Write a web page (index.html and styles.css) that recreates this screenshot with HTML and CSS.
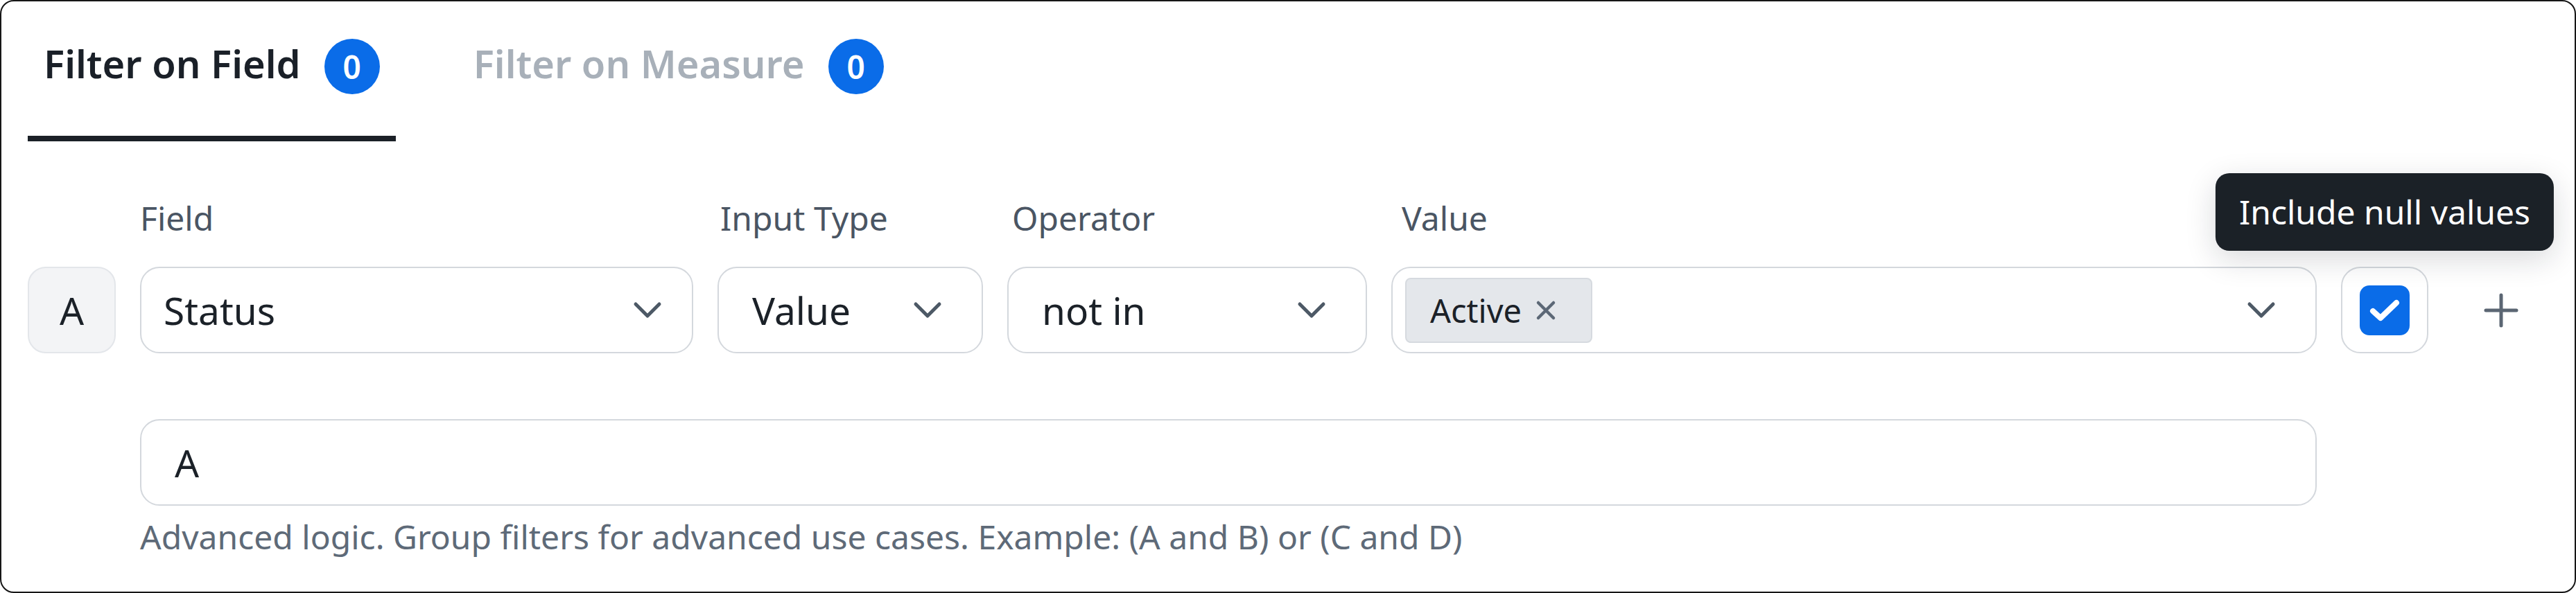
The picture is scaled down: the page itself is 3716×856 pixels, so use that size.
FILE: index.html
```html
<!DOCTYPE html>
<html lang="en">
<head>
<meta charset="utf-8">
<title>Filters</title>
<link rel="stylesheet" href="styles.css">
</head>
<body>
<div class="card">
  <div class="tabs">
    <div class="tab tab--active"><span class="tab__label">Filter on Field</span><span class="badge">0</span></div>
    <div class="tab"><span class="tab__label">Filter on Measure</span><span class="badge">0</span></div>
  </div>

  <div class="filters">
    <div class="lbl"></div>
    <div class="lbl">Field</div>
    <div class="lbl lbl--type">Input Type</div>
    <div class="lbl lbl--operator">Operator</div>
    <div class="lbl lbl--value">Value</div>

    <div class="cell row-id">A</div>
    <div class="cell select select--field">
      <span class="select__text">Status</span>
      <svg class="chevron" viewBox="0 0 42 26"><polyline points="4,4 21,21 38,4"/></svg>
    </div>
    <div class="cell select">
      <span class="select__text">Value</span>
      <svg class="chevron" viewBox="0 0 42 26"><polyline points="4,4 21,21 38,4"/></svg>
    </div>
    <div class="cell select">
      <span class="select__text">not in</span>
      <svg class="chevron" viewBox="0 0 42 26"><polyline points="4,4 21,21 38,4"/></svg>
    </div>
    <div class="cell select select--multi">
      <span class="chip">Active<svg class="chip__x" viewBox="0 0 30 30"><path d="M4 4L26 26M26 4L4 26"/></svg></span>
      <svg class="chevron" viewBox="0 0 42 26"><polyline points="4,4 21,21 38,4"/></svg>
    </div>
    <div class="cell check-cell">
      <div class="tooltip">Include null values</div>
      <span class="checkbox"><svg viewBox="0 0 72 72"><polyline points="19,37 30,47 53,25"/></svg></span>
    </div>
    <div class="cell icon-btn">
      <svg class="plus" viewBox="0 0 50 50"><path d="M25 3V47M3 25H47"/></svg>
    </div>
    <div class="cell icon-btn icon-btn--edge">
      <svg class="ring" viewBox="0 0 50 50"><circle cx="25" cy="25" r="21"/></svg>
    </div>

    <div class="advanced">A</div>
    <p class="hint">Advanced logic. Group filters for advanced use cases. Example: (A and B) or (C and D)</p>
  </div>
</div>
</body>
</html>
```

FILE: styles.css
```css
html, body {
  margin: 0;
  padding: 0;
  background: #ffffff;
}

body {
  font-family: "Noto Sans", "Open Sans", sans-serif;
  color: #1b2128;
}

.card {
  box-sizing: border-box;
  width: 3716px;
  height: 856px;
  border: 2px solid #161616;
  border-radius: 20px;
  background: #ffffff;
  overflow: hidden;
}

/* Tabs */
.tabs {
  display: flex;
  gap: 89px;
  padding-left: 38px;
}

.tab {
  display: flex;
  align-items: flex-start;
  gap: 34px;
  padding: 54px 23px 60px;
  border-bottom: 8px solid transparent;
  color: #a8b0b9;
}

.tab--active {
  color: #1a2028;
  border-bottom-color: #1b2027;
}

.tab__label {
  font-size: 56px;
  font-weight: 600;
  line-height: 70px;
  white-space: nowrap;
}

.badge {
  width: 80px;
  height: 80px;
  border-radius: 50%;
  background: #0a6ce8;
  color: #ffffff;
  font-size: 46px;
  font-weight: 600;
  line-height: 80px;
  text-align: center;
}

/* Filter grid */
.filters {
  display: grid;
  grid-template-columns: 127px 798px 383px 519px 1335px 126px 140px 50px;
  column-gap: 35px;
  margin: 79px 0 0 38px;
}

.lbl {
  grid-row: 1;
  font-size: 48px;
  line-height: 64px;
  color: #4a5563;
  white-space: nowrap;
}

.lbl--type {
  padding-left: 4px;
}

.lbl--operator {
  padding-left: 7px;
}

.lbl--value {
  padding-left: 15px;
}

.cell {
  grid-row: 2;
  box-sizing: border-box;
  height: 125px;
  margin-top: 38px;
}

.row-id {
  display: flex;
  align-items: center;
  justify-content: center;
  background: #f3f4f6;
  border: 2px solid #e3e6ea;
  border-radius: 26px;
  font-size: 55px;
  color: #1b2128;
}

.select {
  display: flex;
  align-items: center;
  justify-content: space-between;
  padding: 0 57px 0 48px;
  border: 2px solid #d4d8dd;
  border-radius: 28px;
  background: #ffffff;
}

.select--field {
  padding: 0 43px 0 32px;
}

.select--multi {
  padding-left: 18px;
}

.select__text {
  font-size: 55px;
  color: #1b2128;
  white-space: nowrap;
}

.chevron {
  width: 42px;
  height: 26px;
  flex: none;
}

.chevron polyline {
  fill: none;
  stroke: #4d5966;
  stroke-width: 5;
  stroke-linecap: round;
  stroke-linejoin: round;
}

.chip {
  display: inline-flex;
  align-items: center;
  gap: 20px;
  box-sizing: border-box;
  height: 94px;
  padding: 0 50px 0 34px;
  background: #e4e7eb;
  border: 2px solid #d6dadf;
  border-radius: 8px;
  font-size: 47px;
  color: #1b2128;
}

.chip__x {
  width: 30px;
  height: 30px;
}

.chip__x path {
  stroke: #5c6876;
  stroke-width: 4.5;
  stroke-linecap: round;
}

.check-cell {
  position: relative;
  display: flex;
  align-items: center;
  justify-content: center;
  border: 2px solid #d4d8dd;
  border-radius: 28px;
  background: #ffffff;
}

.checkbox {
  display: block;
  width: 72px;
  height: 72px;
  border-radius: 14px;
  background: #0a6ce8;
}

.checkbox svg {
  display: block;
  width: 72px;
  height: 72px;
}

.checkbox polyline {
  fill: none;
  stroke: #ffffff;
  stroke-width: 8;
  stroke-linecap: round;
  stroke-linejoin: round;
}

.tooltip {
  position: absolute;
  bottom: calc(100% + 25px);
  left: 50%;
  transform: translateX(-50%);
  height: 112px;
  padding: 0 34px;
  border-radius: 20px;
  background: #1b2127;
  color: #ffffff;
  font-size: 48px;
  line-height: 112px;
  white-space: nowrap;
  box-shadow: 0 12px 44px rgba(17, 24, 39, 0.16);
}

.icon-btn {
  display: flex;
  align-items: center;
  justify-content: center;
}

.icon-btn--edge {
  justify-content: flex-start;
}

.plus {
  width: 50px;
  height: 50px;
}

.plus path {
  stroke: #5b6673;
  stroke-width: 5;
  stroke-linecap: round;
}

.ring {
  width: 50px;
  height: 50px;
}

.ring circle {
  fill: none;
  stroke: #3a4450;
  stroke-width: 5;
}

.advanced {
  grid-row: 3;
  grid-column: 2 / 6;
  box-sizing: border-box;
  height: 125px;
  margin-top: 95px;
  display: flex;
  align-items: center;
  padding-left: 48px;
  border: 2px solid #d4d8dd;
  border-radius: 28px;
  font-size: 55px;
  color: #1b2128;
}

.hint {
  grid-row: 4;
  grid-column: 2 / 6;
  margin: 13px 0 0;
  font-size: 48px;
  line-height: 64px;
  color: #5e6a78;
  white-space: nowrap;
}
```
